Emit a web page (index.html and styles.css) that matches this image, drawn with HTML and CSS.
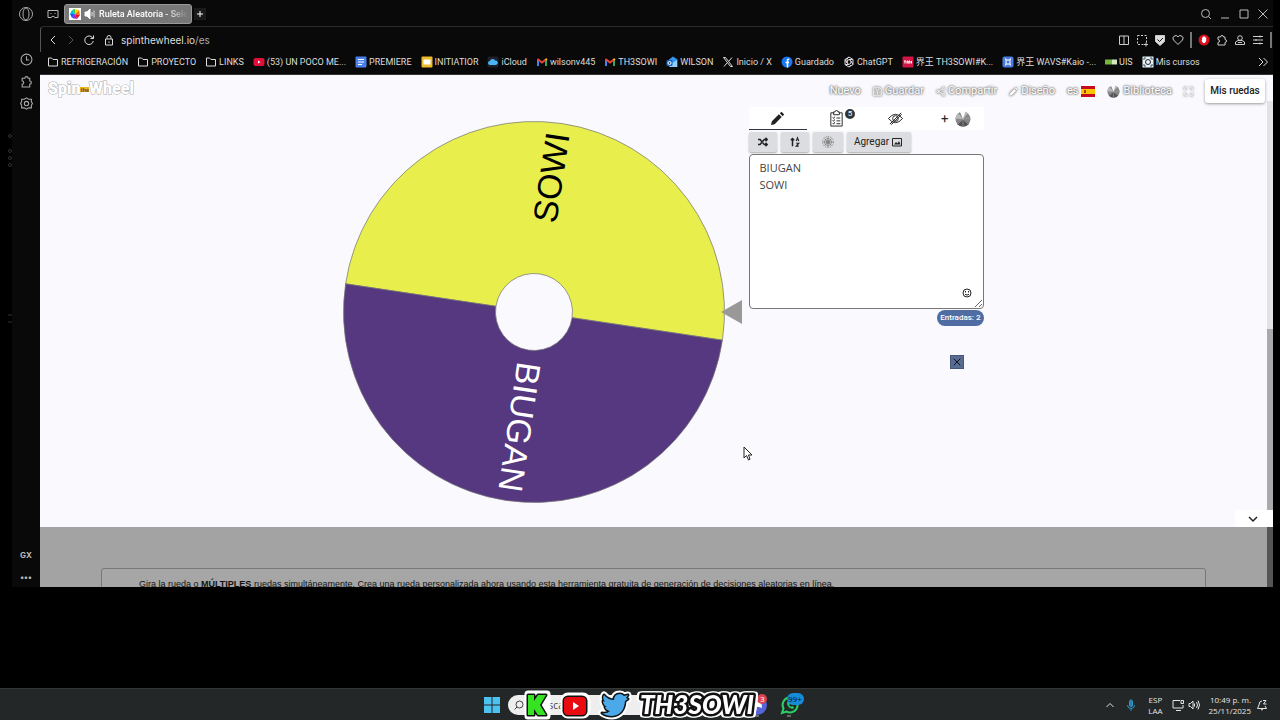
FILE: index.html
```html
<!DOCTYPE html>
<html lang="es">
<head>
<meta charset="utf-8">
<title>Ruleta Aleatoria</title>
<link rel="stylesheet" href="styles.css">
</head>
<body>
<svg class="defs" aria-hidden="true">
  <symbol id="folder" viewBox="0 0 12 12"><path d="M1.500 2h3l1.500 1.500h4.500v6.500h-9z"/></symbol>
  <symbol id="puzzle" viewBox="0 0 12 12"><path d="M2 3h2.500a1.500 1.500 0 0 1 3 0H9v2.500a1.500 1.500 0 0 1 0 3V11H2V8.500a1.500 1.500 0 0 0 0-3z"/></symbol>
  <symbol id="gmail" viewBox="0 0 12 12"><path d="M2 10V3" stroke="#4285f4" stroke-width="2"/><path d="M10 10V3" stroke="#34a853" stroke-width="2"/><path d="M1.500 3 6 6.500 10.500 3" stroke="#ea4335" stroke-width="2"/><path d="M9.500 4l1.500-1" stroke="#fbbc04" stroke-width="2"/></symbol>
  <symbol id="mini-wheel" viewBox="0 0 16 16"><circle cx="8" cy="8" r="7.500" fill="#888" stroke="none"/><path d="M8 8 2 13a8 8 0 0 0 12 0z" fill="#555" stroke="none"/><path d="M8 8V0l5 2zM8 8 0 8l3-6z" fill="#bbb" stroke="none"/><path d="M8 8 4.500 0h6z" fill="#fafafe" stroke="none"/><path d="M8 8 3 13M8 8v8M8 8l5 5M8 8l8-1M8 8 0 7" stroke="#aaa" stroke-width=".6"/></symbol>
  <symbol id="pencil" viewBox="0 0 16 16"><path d="M1 15l1-4 7.500-7.500 3 3L5 14zM10.500 2.500l1.800-1.600 2.800 2.800-1.600 1.800z" fill="currentColor" stroke="none"/></symbol>
</svg>

<div class="browser">
  <aside class="side">
    <svg class="opera" viewBox="0 0 16 16"><circle cx="8" cy="8" r="6.500"/><ellipse cx="8" cy="8" rx="3" ry="6"/></svg>
    <nav class="side-tools">
      <svg class="i13" viewBox="0 0 12 12"><circle cx="6" cy="6" r="5"/><path d="M6 3v3.500h2.500"/></svg>
      <svg class="i13"><use href="#puzzle"/></svg>
      <svg class="i13" viewBox="0 0 12 12"><path d="M6 .8 8 2h2.500v2.500L11.500 6l-1 1.500V10H8l-2 1.200L4 10H1.500V7.500L.5 6l1-1.500V2H4z"/><circle cx="6" cy="6" r="2"/></svg>
    </nav>
    <div class="side-end"><b>GX</b><b>•••</b></div>
    <svg class="ghost" viewBox="0 0 6 200"><circle cx="3" cy="6" r="1.500"/><circle cx="3" cy="21" r="1.500"/><circle cx="3" cy="28" r="1.500"/><circle cx="3" cy="35" r="1.500"/><path d="M1 185h4M1 192h4"/></svg>
  </aside>

  <div class="main">
    <header class="tabs">
      <svg class="i12" viewBox="0 0 12 12"><path d="M1 2.500h10v7H8L6 8 4 9.500H1zM3.500 5.500h1M7.500 5.500h1"/></svg>
      <div class="tab">
        <svg class="i12" viewBox="0 0 12 12"><g stroke="none"><rect width="12" height="12" fill="#fff"/><path d="M6 6V1l4 1z" fill="#fd0"/><path d="M6 6l4-4 1 5z" fill="#f70"/><path d="M6 6l5 1-3 4z" fill="#e12"/><path d="M6 6l2 5-5-1z" fill="#92d"/><path d="M6 6l-3 4-2-4z" fill="#25e"/><path d="M6 6 1 6l2-4z" fill="#0be"/><path d="M6 6 3 2l3-1z" fill="#3c4"/></g></svg>
        <svg class="i12" viewBox="0 0 12 12"><path d="M1 4h2l3-3v10L3 8H1z" fill="#fff"/><path d="M8 4v4M10 2.500v7" stroke="#ddd"/></svg>
        <span>Ruleta Aleatoria - Sele</span>
      </div>
      <button class="plus" aria-label="Nueva pestaña"><svg class="i12" viewBox="0 0 12 12"><path d="M6 3v6M3 6h6"/></svg></button>
      <div class="window">
        <svg class="i12" viewBox="0 0 12 12"><circle cx="5.500" cy="5.500" r="4"/><path d="M8.500 8.500 11 11"/></svg>
        <svg class="i12" viewBox="0 0 12 12"><path d="M2 10h8"/></svg>
        <svg class="i12" viewBox="0 0 12 12"><path d="M2 2h8v8H2z"/></svg>
        <svg class="i12" viewBox="0 0 12 12"><path d="M1.500 1.500l9 9M10.500 1.500l-9 9"/></svg>
      </div>
    </header>
    <div class="address">
      <svg class="i12" viewBox="0 0 12 12"><path d="M8 2 4 6l4 4"/></svg>
      <svg class="i12 dim" viewBox="0 0 12 12"><path d="M4 2l4 4-4 4"/></svg>
      <svg class="i12" viewBox="0 0 12 12"><path d="M10 4.500A4.300 4.300 0 1 0 10.300 7M10.500 1.500v3h-3"/></svg>
      <svg class="i12 lock" viewBox="0 0 12 12"><path d="M2.500 5h7v6h-7zM4 5V3.500a2 2 0 0 1 4 0V5M6 7.500v1.500"/></svg>
      <span class="url">spinthewheel.io<i>/es</i></span>
      <div class="ext">
        <svg class="i12" viewBox="0 0 12 12"><path d="M1.500 2h9v8.500h-9zM6 2v8.500"/></svg>
        <svg class="i12" viewBox="0 0 12 12"><path d="M1.500 1.500h9v9h-9z" stroke-dasharray="2 1.500"/><path d="M8 10.500h4M10 8.500v4"/></svg>
        <svg class="i12" viewBox="0 0 12 12"><path d="M1.500 1.500h9v6L6 11.500 1.500 7.500z" fill="#ddd"/><path d="M3.500 5.500 5.500 7.500 9 4" stroke="#111"/></svg>
        <svg class="i12" viewBox="0 0 12 12"><path d="M6 10.500 1.500 6a2.600 2.600 0 0 1 4.500-3.200A2.600 2.600 0 0 1 10.500 6z"/></svg>
        <i class="bar"></i>
        <svg class="i12" viewBox="0 0 12 12"><circle cx="6" cy="6" r="5.500" fill="#d8101c" stroke="none"/><path d="M4 3.500h1V2.500h2.200v1h1v3.300L7 9H5L3.500 6.500 4 6z" fill="#fff" stroke="none"/></svg>
        <svg class="i12"><use href="#puzzle"/></svg>
        <svg class="i12" viewBox="0 0 12 12"><circle cx="6" cy="4" r="2.300"/><path d="M1.500 10.500V8L4 6.500h4L10.500 8v2.500zM4 8.500h4"/></svg>
        <svg class="i12" viewBox="0 0 12 12"><path d="M1 2.500h10M1 6h10M1 9.500h10M8 1.500v2M4 5v2M8 8.500v2"/></svg>
        <i class="bar"></i>
      </div>
    </div>
    <nav class="marks">
      <a href="#"><svg class="i12"><use href="#folder"/></svg>REFRIGERACIÓN</a>
      <a href="#"><svg class="i12"><use href="#folder"/></svg>PROYECTO</a>
      <a href="#"><svg class="i12"><use href="#folder"/></svg>LINKS</a>
      <a href="#"><svg class="i12" viewBox="0 0 12 12"><rect x=".5" y="2" width="11" height="8" rx="2" fill="#e0103a" stroke="none"/><path d="M5 4.500v3L7.500 6z" fill="#fff" stroke="none"/></svg>(53) UN POCO ME...</a>
      <a href="#"><svg class="i12" viewBox="0 0 12 12"><rect x=".5" y=".5" width="11" height="11" rx="1" fill="#4a80ea" stroke="none"/><path d="M3 3.500h6M3 6h6M3 8.500h4" stroke="#fff"/></svg>PREMIERE</a>
      <a href="#"><svg class="i12" viewBox="0 0 12 12"><rect x=".5" y=".5" width="11" height="11" rx="1" fill="#eebb2d" stroke="none"/><path d="M2.500 3.500h7v5h-7z" fill="#fff" stroke="none"/></svg>INITIATIOR</a>
      <a href="#"><svg class="i12" viewBox="0 0 12 12"><rect x=".5" y=".5" width="11" height="11" rx="2" fill="#1c2028" stroke="none"/><path d="M3 9a2 2 0 0 1 0-4 2.700 2.700 0 0 1 5-.5A2.300 2.300 0 0 1 9 9z" fill="#4bb4f4" stroke="none"/></svg>iCloud</a>
      <a href="#"><svg class="i12"><use href="#gmail"/></svg>wilsonv445</a>
      <a href="#"><svg class="i12"><use href="#gmail"/></svg>TH3SOWI</a>
      <a href="#"><svg class="i12" viewBox="0 0 12 12"><path d="M3 3.500 7 .5l4.500 3v7.500H3z" fill="#3494ea" stroke="none"/><path d="M5 8l6-4v7H4z" fill="#8ed0f8" stroke="none"/><rect x=".5" y="4" width="6" height="6" rx="1" fill="#1467c8" stroke="none"/><circle cx="3.500" cy="7" r="1.500" stroke="#fff"/></svg>WILSON</a>
      <a href="#"><svg class="i12" viewBox="0 0 12 12"><path d="M1.500 1.500h2l7 9h-2zM10 1.500 7 5M5 7 2 10.500"/></svg>Inicio / X</a>
      <a href="#"><svg class="i12" viewBox="0 0 12 12"><circle cx="6" cy="6" r="5.500" fill="#1877f2" stroke="none"/><path d="M6.500 11.500v-7q0-1.500 1.800-1.300M4.500 6.500h3.500" stroke="#fff" stroke-width="1.600"/></svg>Guardado</a>
      <a href="#"><svg class="i12" viewBox="0 0 12 12"><path d="M6 1l4 2.500v5L6 11 2 8.500v-5zM6 3.500 8 5v2L6 8.500 4 7V5zM6 1 4 3v4M10 3.500 6 3.500M10 8.500 8 5M6 11l2-2M2 8.500h4M2 3.500 4 7"/></svg>ChatGPT</a>
      <a href="#"><svg class="i12" viewBox="0 0 12 12"><rect x=".5" y=".5" width="11" height="11" rx="1" fill="#d31645" stroke="none"/><path d="M2 5h2M3 5v2.500M5 7.500V5h1v2.500M7 7.500V5h1v2.500M9.500 5v2.500" stroke="#fff"/></svg>界王 TH3SOWI#K...</a>
      <a href="#"><svg class="i12" viewBox="0 0 12 12"><rect x=".5" y=".5" width="11" height="11" rx="2" fill="#4c7be0" stroke="none"/><path d="M4 4h4v4H4zM3 3h1v1M9 3H8v1M3 9h1V8M9 9H8V8" stroke="#fff"/></svg>界王 WAVS#Kaio -...</a>
      <a href="#"><svg class="i12" viewBox="0 0 12 12"><path d="M0 3.500h7v5H0z" fill="#78b739" stroke="none"/><path d="M7 3.500h5v5H7z" fill="#d4e8c8" stroke="none"/></svg>UIS</a>
      <a href="#"><svg class="i12" viewBox="0 0 12 12"><path d="M.5.500h11v11H.5z" fill="#e9f2f2" stroke="none"/><circle cx="6" cy="6" r="2.500" stroke="#223"/><path d="M2 4V2h2M8 2h2v2M2 8v2h2M8 10h2V8" stroke="#357"/></svg>Mis cursos</a>
      <svg class="i12 more" viewBox="0 0 12 12"><path d="M2 2l4 4-4 4M6.500 2l4 4-4 4"/></svg>
    </nav>

    <div class="view">
      <main class="page">
        <section class="hero">
          <header class="top">
            <a class="logo" href="#">Spin<em>the</em>Wheel</a>
            <nav class="menu">
              <a href="#">Nuevo</a>
              <a href="#"><svg class="i9" viewBox="0 0 12 12"><path d="M1 1h8l2 2v8H1zM4 1v3h4V1M6 6v4"/></svg>Guardar</a>
              <a href="#"><svg class="i9" viewBox="0 0 12 12"><path d="M10 2 3 6l7 4"/><circle cx="10" cy="2" r="1.500"/><circle cx="2.500" cy="6" r="1.500"/><circle cx="10" cy="10" r="1.500"/></svg>Compartir</a>
              <a href="#"><svg class="i9"><use href="#pencil"/></svg>Diseño</a>
              <a href="#">es<svg class="flag" viewBox="0 0 14 11"><path d="M0 0h14v11H0z" fill="#c60b1e"/><path d="M0 3h14v5H0z" fill="#ffc400"/><path d="M3 4h2v3H3z" fill="#a33"/></svg></a>
              <a href="#"><svg class="i13"><use href="#mini-wheel"/></svg>Biblioteca</a>
              <a href="#" aria-label="Pantalla completa"><svg class="i9" viewBox="0 0 12 12"><path d="M1 4V1h3M8 1h3v3M11 8v3H8M4 11H1V8"/></svg></a>
              <button class="mine">Mis ruedas</button>
            </nav>
          </header>
          <div class="stage">
            <svg class="wheel" viewBox="0 0 400 384">
              <g transform="translate(191 192) rotate(8.500)">
                <path d="M-190.500 0A190.500 190.500 0 0 1 190.500 0H38.500A38.500 38.500 0 0 0-38.500 0Z" fill="#e8ef4c"/>
                <path d="M-190.500 0A190.500 190.500 0 0 0 190.500 0H38.500A38.500 38.500 0 0 1-38.500 0Z" fill="#553880"/>
                <text transform="rotate(-90)" x="181" y="9" fill="#000">SOWI</text>
                <text transform="rotate(90)" x="181" y="9" fill="#fff">BIUGAN</text>
              </g>
              <path d="M378 192l21-12v24z" fill="#999" stroke="none"/>
            </svg>
            <section class="panel">
              <nav class="modes">
                <button class="on" aria-label="Editar"><svg class="i15"><use href="#pencil"/></svg></button>
                <button aria-label="Resultados"><svg class="i17" viewBox="0 0 16 18"><path d="M5 3H2v14h12V3h-3M5 2h1.500a1.500 1.500 0 0 1 3 0H11v3H5zM4 8l1 1 1-2M4 11l1 1 1-2M4 14l1 1 1-2M8 8.500h4M8 11.500h4M8 14.500h4"/></svg><span class="count">5</span></button>
                <button aria-label="Ocultar"><svg class="i17" viewBox="0 0 18 18"><path d="M1.500 9Q9 0 16.500 9 9 18 1.500 9zM3 15 15 3M4.500 15.500 15.500 4.500"/><circle cx="9" cy="9" r="3"/></svg></button>
                <button class="add" aria-label="Agregar rueda">+<svg class="i16"><use href="#mini-wheel"/></svg></button>
              </nav>
              <div class="tools">
                <button aria-label="Mezclar"><svg class="i10 bold" viewBox="0 0 12 12"><path d="M0 3h2.500l5 6H11M0 9h2.500l5-6H11M9 1l2 2-2 2M9 7l2 2-2 2"/></svg></button>
                <button aria-label="Ordenar"><svg class="i10 bold" viewBox="0 0 12 12"><path d="M3 11V2M1 4l2-2 2 2"/><path d="M7.500 5l1.500-4 1.500 4M7.500 7.500h3l-3 3.500h3" stroke-width="1.400"/></svg></button>
                <button class="soft" aria-label="Opciones"><svg class="i14" viewBox="0 0 14 14"><circle cx="7" cy="7" r="5.500" stroke-dasharray="1.500 1"/><circle cx="7" cy="7" r="3.500"/><circle cx="7" cy="7" r="1.500"/><path d="M7 2v10M2 7h10M3.500 3.500l7 7M10.500 3.500l-7 7"/></svg></button>
                <button class="wide">Agregar <svg class="i12" viewBox="0 0 12 12"><path d="M1.500 2.500h9v7.500h-9z"/><path d="M3 8.500 5 6l1.500 1.500L8 5l1.500 3.500z" fill="currentColor" stroke="none"/></svg></button>
              </div>
              <div class="box">
                <textarea aria-label="Entradas" spellcheck="false">BIUGAN
SOWI</textarea>
                <svg class="face" viewBox="0 0 12 12"><circle cx="6" cy="6" r="4"/><path d="M4.500 4v1.500M7.500 4v1.500M4 7.300q2 1.500 4 0"/></svg>
              </div>
              <span class="badge">Entradas: 2</span>
              <button class="close" aria-label="Cerrar"><svg viewBox="0 0 12 12"><path d="M2 2l8 8M10 2l-8 8"/></svg></button>
            </section>
          </div>
          <button class="down" aria-label="Bajar"><svg class="i12" viewBox="0 0 12 12"><path d="M2 4l4 4 4-4"/></svg></button>
        </section>
        <section class="info">
          <p>Gira la rueda o <b>MÚLTIPLES</b> ruedas simultáneamente. Crea una rueda personalizada ahora usando esta herramienta gratuita de generación de decisiones aleatorias en línea.</p>
        </section>
      </main>
      <div class="scroll"><i></i></div>
    </div>
  </div>
</div>

<footer class="taskbar">
  <div class="dock">
    <svg class="i16" viewBox="0 0 16 16"><path d="M0 0h7.500v7.500H0zM8.500 0H16v7.500H8.500zM0 8.500h7.500V16H0zM8.500 8.500H16V16H8.500z" fill="#4cc2f1" stroke="none"/></svg>
    <label class="search"><svg class="i12" viewBox="0 0 12 12"><circle cx="6.500" cy="5.500" r="3.500"/><path d="M4 8 1.500 10.500"/></svg><input aria-label="Buscar" value="Buscar"></label>
    <svg class="app" viewBox="0 0 24 24"><circle cx="9" cy="12" r="10" fill="#5763d8" stroke="none"/><path d="M4 15q1-8 5-6 5-2 5 6l-3-1H7z" fill="#fff" stroke="none"/><circle cx="14" cy="6" r="5" fill="#d94350" stroke="none"/><text x="12" y="9">3</text><path d="M7 23h4" stroke="#aaa"/></svg>
    <svg class="app" viewBox="0 0 24 24"><path d="M2 20l1.500-4.500a7.500 7.500 0 1 1 3 3z" stroke="#2bd066" stroke-width="2"/><path d="M7 9q0 6 6 7l1-2-2-1-1 1-2-2 1-1-1-2z" fill="#2bd066" stroke="none"/><rect x="7" y="0" width="17" height="12" rx="6" fill="#168bd8" stroke="none"/><text class="dark" x="8" y="9">99+</text><path d="M7 23h4" stroke="#aaa"/></svg>
  </div>
  <svg class="brand" viewBox="0 0 240 32">
    <g class="rim"><path d="M8 5h19v22H8z"/><rect x="44" y="7" width="23" height="19" rx="4"/><path d="M82 24q5 1 8-2-4-1-5-4h2q-4-2-4-6l2 1q-3-4-1-7 4 5 10 5 0-6 6-6 2 0 4 2l4-1-2 3 2 1-3 2q-1 14-13 15-6 0-10-3z"/></g>
    <g class="edge"><path d="M8 6h6v6l4-6h8l-6 10 6 10h-8l-4-6v6H8z" fill="#35e323"/><rect x="44" y="8" width="22" height="18" rx="4" fill="#e80b12"/><path d="M53 13v8l6-4z" fill="#fff" stroke="none"/><path d="M82 24q5 1 8-2-4-1-5-4h2q-4-2-4-6l2 1q-3-4-1-7 4 5 10 5 0-6 6-6 2 0 4 2l4-1-2 3 2 1-3 2q-1 14-13 15-6 0-10-3z" fill="#4ba9ea"/></g>
    <text class="word" x="120" y="25">TH3SOWI</text>
  </svg>
  <div class="tray">
    <svg class="i12" viewBox="0 0 12 12"><path d="M2.500 8 6 4.500 9.500 8"/></svg>
    <svg class="i12 mic" viewBox="0 0 12 12"><rect x="4.500" y="1" width="3" height="6.500" rx="1.500" fill="#287fae"/><path d="M2.500 6q0 3.500 3.500 3.500T9.500 6M6 9.500V12"/></svg>
    <span class="lang">ESP<br>LAA</span>
    <div class="pair"><svg class="i12" viewBox="0 0 12 12"><path d="M8 1.500H1V9h10V6M4 11.500h5M9 1.500h2.500v3H9z"/></svg>
    <svg class="i12" viewBox="0 0 12 12"><path d="M1 4.500h1.500L5 2v8L2.500 7.500H1zM6.500 4.500v3M8.500 3q2 3 0 6M10 1.500q3 4.500 0 9"/></svg></div>
    <span class="clock">10:49 p. m.<br>25/11/2025</span>
    <svg class="i12" viewBox="0 0 12 12"><path d="M6 2Q3 2 3 6L1.500 9.500h9L9 7M5 10.500q1 1 2 0M7 1.500h3L7.500 5H10.500"/></svg>
  </div>
</footer>
<svg class="cursor" viewBox="0 0 10 15"><path d="M1 1v11l2.500-2.500L5.500 14l1.500-.8L5.500 9H9z" fill="#fff" stroke="#222"/></svg>
</body>
</html>
```
FILE: styles.css
```css
* { box-sizing: border-box; }
body {
  margin: 0;
  height: 100vh;
  display: flex;
  flex-direction: column;
  background: #000;
  color: #ddd;
  font: 10px/12px Inter, "Noto Sans CJK JP", sans-serif;
  overflow: hidden;
}
svg { fill: none; stroke: currentColor; flex: none; display: block; overflow: visible; }
button, input, textarea { font: inherit; color: inherit; border: 0; padding: 0; margin: 0; background: none; }
a { color: inherit; text-decoration: none; }
.defs { width: 0; height: 0; position: absolute; }
.i9 { width: 9px; height: 9px; }
.i10 { width: 10px; height: 10px; }
.i12 { width: 12px; height: 12px; }
.i13 { width: 13px; height: 13px; }
.i14 { width: 14px; height: 14px; }
.i15 { width: 15px; height: 15px; }
.i16 { width: 16px; height: 16px; }
.i17 { width: 17px; height: 17px; }

.browser { flex: 1; min-height: 0; display: flex; margin: 0 7px 101px 12px; background: #090909; }
.side { width: 28px; flex: none; display: flex; flex-direction: column; align-items: center; padding: 6px 0 4px; position: relative; color: #aaa; }
.opera { width: 16px; height: 16px; }
.side-tools { display: flex; flex-direction: column; gap: 9px; margin-top: 31px; }
.side-end { margin-top: auto; display: flex; flex-direction: column; gap: 10px; align-items: center; font-size: 8px; color: #bbb; }
.ghost { position: absolute; left: -5px; top: 130px; width: 6px; height: 200px; color: #333; }
.main { flex: 1; min-width: 0; display: flex; flex-direction: column; }
.tabs { height: 26px; flex: none; display: flex; align-items: center; padding: 2px 4px 0 7px; gap: 5px; color: #bbb; }
.tab { width: 128px; height: 20px; display: flex; align-items: center; gap: 3px; padding: 0 4px; background: #777; border: 1px solid #999; border-radius: 3px; color: #fff; white-space: nowrap; font: 500 9px/12px Roboto, sans-serif; }
.tab span { -webkit-mask-image: linear-gradient(90deg, #000 75%, transparent); mask-image: linear-gradient(90deg, #000 75%, transparent); }
.plus { width: 12px; height: 12px; margin-left: -3px; background: #1a1a1a; color: #fff; }
.window { margin-left: auto; display: flex; gap: 7px; }
.address { height: 26px; flex: none; display: flex; align-items: center; padding: 0 1px 0 6px; gap: 6px; border-top: 1px solid #2a2a2a; border-left: 1px solid #555; border-radius: 4px 0 0; }
.dim { color: #555; }
.lock { margin-left: 2px; }
.url i { font-style: normal; color: #aaa; }
.ext { margin-left: auto; display: flex; align-items: center; gap: 6px; color: #ccc; }
.bar { width: 2px; height: 16px; background: #777; }
.marks { height: 23px; flex: none; display: flex; align-items: center; padding: 0 4px 3px 7px; gap: 9px; white-space: nowrap; border-bottom: 1px solid #333; font: 9px/12px Roboto, "Noto Sans CJK JP", sans-serif; color: #ddd; }
.marks a { display: flex; align-items: center; gap: 2px; }
.more { margin-left: auto; }

.view { flex: 1; min-height: 0; display: flex; background: #a3a3a3; font-family: Roboto, sans-serif; color: #222; overflow: hidden; }
.page { flex: 1; min-width: 0; }
.scroll { width: 6px; background: linear-gradient(#aaa 435px, #fff 435px 452px, #555 452px); }
.scroll i { display: block; height: 254px; background: #e3e3e5; border-top: 26px solid #fafafe; }
.hero { height: 452px; background: #fafafe; position: relative; }
.top { display: flex; justify-content: space-between; padding: 4px 2px 0 8px; height: 32px; }
.logo { font: 900 16px/20px Roboto, sans-serif; height: 20px; color: #fff; -webkit-text-stroke: 1px #aaa; paint-order: stroke fill; display: flex; align-items: center; }
.logo em { font: 700 6px/5px Roboto, sans-serif; color: #653; background: #eeb51c; -webkit-text-stroke: 0; }
.menu { display: flex; align-items: center; gap: 12px; height: 24px; color: #fff; font-size: 11px; text-shadow: 0 0 2px #777, 0 0 2px #888, 0 0 3px #888; }
.menu a { display: flex; align-items: center; gap: 3px; }
.menu .i9 { filter: drop-shadow(0 0 1px #777) drop-shadow(0 0 1px #999); }
.flag { width: 14px; height: 11px; stroke: none; }
.mine { background: #fff; color: #222; font-size: 10px; font-weight: 500; width: 60px; height: 24px; border-radius: 3px; box-shadow: 0 1px 3px #999; text-shadow: none; }
.stage { display: flex; justify-content: center; gap: 6px; padding-left: 19px; }
.wheel { width: 400px; height: 384px; margin-top: 13px; stroke: #777; stroke-width: .7; }
.wheel text { font: 34px "Liberation Sans", sans-serif; text-anchor: end; stroke: none; }
.panel { width: 235px; display: flex; flex-direction: column; }
.modes { display: grid; grid-template-columns: repeat(4, 1fr); height: 23px; background: #fff; }
.modes button { display: flex; align-items: center; justify-content: center; position: relative; }
.modes .on { border-bottom: 1px solid #334; }
.modes .add { gap: 7px; font-size: 13px; padding-left: 4px; }
.count { position: absolute; right: 11px; top: 2px; width: 10px; height: 10px; border-radius: 50%; background: #2c373b; color: #fff; font-size: 8px; line-height: 10px; }
.tools { display: flex; gap: 4px; padding: 1px 0; height: 24px; }
.tools button { width: 28px; height: 20px; margin-top: 1px; background: #dcdde0; border-radius: 2px; display: flex; align-items: center; justify-content: center; box-shadow: 0 1px 2px #aaa; font-size: 10px; }
.tools .wide { width: 64px; gap: 2px; }
.tools .soft { color: #777; width: 30px; }
.soft svg { stroke-width: .7; }
.bold { stroke-width: 1.800; }
.box { position: relative; }
textarea { display: block; width: 100%; height: 155px; padding: 4px 10px; background: #fff; border: 1px solid #777; border-radius: 4px; font: 11px/17px "Open Sans", sans-serif; color: #444; }
.face { position: absolute; right: 11px; bottom: 10px; width: 12px; height: 12px; }
.badge { align-self: flex-end; margin-top: 1px; padding: 0 3px; height: 16px; line-height: 16px; border-radius: 8px; background: #4f6da3; color: #fff; font-size: 8px; font-weight: 500; }
.close { align-self: flex-end; margin: 29px 20px 0 0; width: 14px; height: 14px; padding: 1px; background: #596c91; border: 1px solid #45577b; color: #000; }
.down { position: absolute; right: 0; bottom: 0; width: 32px; height: 17px; background: #fff; display: flex; align-items: center; padding-left: 12px; }
.down svg { stroke-width: 1.500; }
.info { margin: 41px 61px 0; border: 1px solid #777; border-radius: 3px; background: #a6a6a6; padding: 7px 37px; }
.info p { margin: 0; font: 9px/16px "Liberation Sans", sans-serif; color: #111; }

.taskbar { height: 32px; flex: none; position: relative; background: #242727; border-top: 1px solid #353737; font-family: "Open Sans", sans-serif; color: #e5e5e5; }
.dock { height: 100%; display: flex; align-items: center; justify-content: center; gap: 8px; padding-left: 8px; }
.search { width: 232px; height: 20px; border-radius: 10px; background: #eee; color: #444; display: flex; align-items: center; padding: 0 5px; gap: 11px; }
.search input { width: 100px; min-width: 0; }
.app { width: 24px; height: 24px; }
.app text { font: 8px "Open Sans", sans-serif; fill: #fff; stroke: none; }
.app .dark { fill: #012; }
.brand { position: absolute; left: 50%; top: 0; width: 240px; height: 32px; margin-left: -120px; }
.rim { fill: #fff; stroke: #fff; stroke-width: 7; stroke-linejoin: round; }
.edge { stroke: #111; stroke-width: 3; stroke-linejoin: round; paint-order: stroke; }
.word { font: italic 900 26px Lato, sans-serif; fill: #fff; stroke: #111; stroke-width: 5; paint-order: stroke; stroke-linejoin: round; filter: drop-shadow(2px 0 0 #fff) drop-shadow(-2px 0 0 #fff) drop-shadow(0 1px 0 #fff) drop-shadow(0 -1px 0 #fff); }
.tray { position: absolute; right: 12px; top: 0; height: 31px; display: flex; align-items: center; gap: 9px; font-size: 8px; line-height: 11px; }
.tray .mic { color: #3696c8; }
.lang { text-align: center; margin-left: 2px; }
.pair { display: flex; gap: 4px; }
.clock { text-align: right; margin-right: -4px; }
.cursor { position: absolute; left: 743px; top: 446px; width: 10px; height: 15px; }
```
